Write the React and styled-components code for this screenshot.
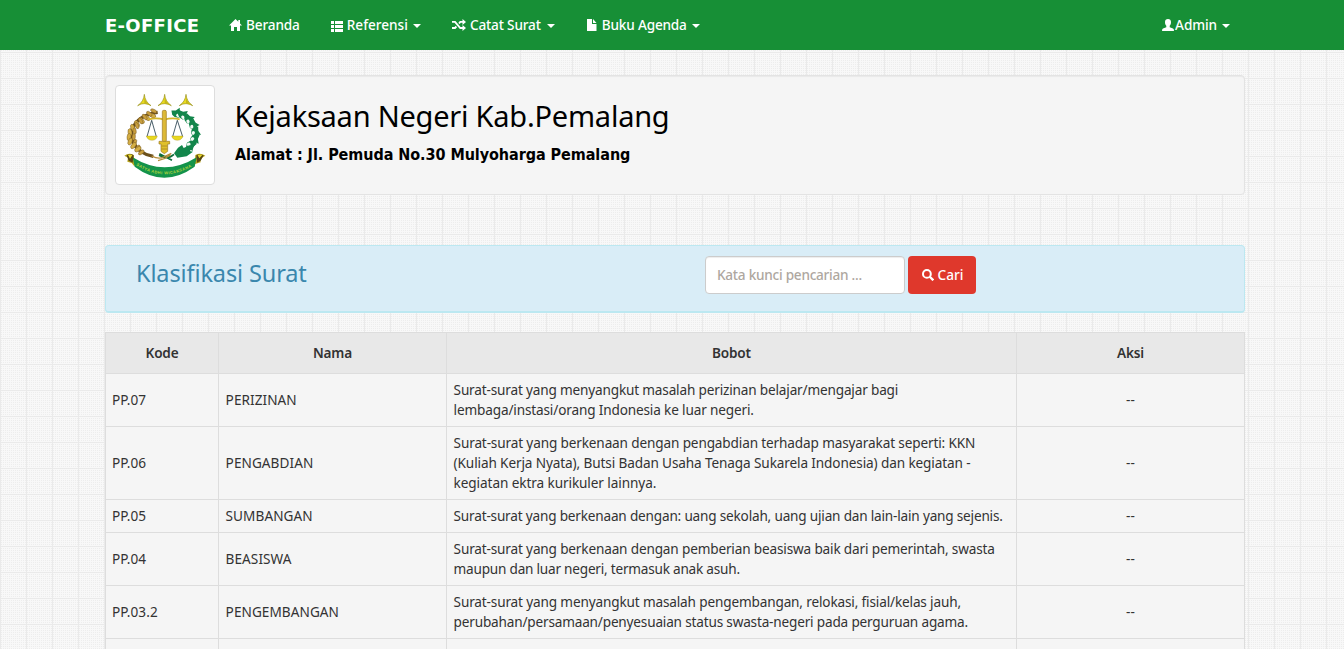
import React from 'react';
import styled, { createGlobalStyle } from 'styled-components';

const Global = createGlobalStyle`
  *, *::before, *::after { box-sizing: border-box; }
  html { overflow: hidden; }
  body {
    margin: 0;
    height: 649px;
    overflow: hidden;
    font-family: "Noto Sans", "Open Sans", sans-serif;
    font-size: 13.6px;
    line-height: 20px;
    color: #333;
    background-color: #f8f8f8;
    background-image:
      linear-gradient(90deg, #eaeaea 1px, transparent 1px),
      linear-gradient(#eaeaea 1px, transparent 1px),
      conic-gradient(#ededed 25%, #f8f8f8 0);
    background-size: 26px 26px, 26px 26px, 2px 2px;
  }
`;

const Navbar = styled.nav`
  height: 50px;
  background: #178f36;
  color: #fff;
`;

const Container = styled.div`
  width: 1140px;
  margin-left: 105px;
`;

const NavInner = styled(Container)`
  display: flex;
  align-items: center;
  height: 50px;
`;

const Brand = styled.div`
  width: 109px;
  padding-top: 2px;
  font: bold 18px/20px "DejaVu Sans", sans-serif;
  letter-spacing: 0.3px;
`;

const NavItem = styled.a`
  display: flex;
  align-items: center;
  gap: ${p => p.$gap ?? 4}px;
  padding: 0 15px 0 ${p => p.$pl ?? 15}px;
  white-space: nowrap;
  font-weight: 500;
  letter-spacing: ${p => p.$ls ?? 0}px;
  color: #fff;
  margin-left: ${p => (p.$right ? 'auto' : '0')};
`;

const Caret = styled.span`
  margin: 2px 0 0 ${p => p.$ml ?? 1}px;
  border: 4px solid transparent;
  border-top-color: #fff;
  border-bottom: 0;
`;

const Well = styled.header`
  display: flex;
  gap: 20px;
  height: 120px;
  margin: 25px 0 50px;
  padding: 9px;
  background: #f5f5f5;
  border: 1px solid #e3e3e3;
  border-radius: 4px;
  box-shadow: inset 0 1px 1px rgba(0, 0, 0, 0.05);
  color: #000;
`;

const Thumb = styled.div`
  width: 100px;
  height: 100px;
  background: #fff;
  border: 1px solid #ddd;
  border-radius: 4px;
  overflow: hidden;
`;

const Title = styled.h1`
  margin: 14px 0 0 -0.5px;
  font-size: 29px;
  line-height: 34px;
  font-weight: 400;
  letter-spacing: -0.23px;
`;

const Address = styled.p`
  margin: 12px 0 0;
  font: bold 16px/20px "DejaVu Sans Condensed", "DejaVu Sans", sans-serif;
  letter-spacing: -0.06px;
`;

const Panel = styled.section`
  display: flex;
  height: 68px;
  margin-bottom: 19px;
  padding: 10px 30px;
  background: #d9edf7;
  border: 1px solid #bce8f1;
  border-bottom-width: 2px;
  border-radius: 4px;
`;

const PanelTitle = styled.h2`
  width: 569px;
  margin: 4px 0 0;
  font-size: 23.5px;
  line-height: 26px;
  font-weight: 400;
  letter-spacing: -0.12px;
  color: #3a87ad;
`;

const Search = styled.input`
  width: 200px;
  height: 38px;
  padding: 0 11px 1px;
  border: 1px solid #ccc;
  border-radius: 4px;
  font: 500 13.6px/20px "Noto Sans", sans-serif;
  letter-spacing: -0.25px;
  box-shadow: inset 0 1px 1px rgba(0, 0, 0, 0.075);
  &::placeholder { color: #aea79f; opacity: 1; }
`;

const Button = styled.button`
  display: flex;
  align-items: center;
  justify-content: center;
  gap: 4px;
  width: 68px;
  height: 38px;
  margin-left: 3px;
  padding: 0 0 0 1px;
  border: 0;
  border-radius: 4px;
  background: #df382c;
  color: #fff;
  font: 500 13.6px/20px "Noto Sans", sans-serif;
`;

const Table = styled.table`
  width: 1139px;
  table-layout: fixed;
  border-collapse: collapse;
  background: #f5f5f5;
`;

const Th = styled.th`
  width: ${p => p.$w}px;
  height: 41px;
  padding: 0;
  border: 1px solid #ddd;
  background: #e8e8e8;
  font-weight: 600;
  letter-spacing: -0.2px;
`;

const Td = styled.td`
  padding: 6px;
  border: 1px solid #ddd;
  white-space: nowrap;
  letter-spacing: 0.06px;
  text-align: ${p => (p.$center ? 'center' : 'left')};
  &:nth-child(2), &:nth-child(3) { padding-left: 6.6px; }
`;

const Line = styled.div`
  height: 20px;
  letter-spacing: ${p => p.$ls}px;
`;

const HomeIcon = () => (
  <svg width="13" height="12" viewBox="0 0 13 12" fill="#fff">
    <path d="M6.5 0 0 6.6h2V12h3V8h3v4h3V6.6h2L11 4.5V1H9.3v1.8z" />
  </svg>
);
const ListIcon = () => (
  <svg width="12" height="13" viewBox="0 -2 12 13" fill="#fff">
    <path d="M0 0h3v3H0zM4 0h8v3H4zM0 4h3v3H0zM4 4h8v3H4zM0 8h3v3H0zM4 8h8v3H4z" />
  </svg>
);
const RandomIcon = () => (
  <svg width="14" height="12" viewBox="0 0 14 12">
    <path d="M0 2.9h3L8.3 9H11M0 9h3l1.4-1.5M7 4.5l1.3-1.6H11" fill="none" stroke="#fff" strokeWidth="1.9" />
    <path d="M10.5 0 14 3l-3.5 3zM10.5 6 14 9l-3.5 3z" fill="#fff" />
  </svg>
);
const FileIcon = () => (
  <svg width="13" height="12" viewBox="-2 0 13 12" fill="#fff">
    <path d="M0 0h5v5h4.500v7H0zM6 0l3.500 4H6z" />
  </svg>
);
const UserIcon = () => (
  <svg width="12" height="12" viewBox="0 0 12 12" fill="#fff">
    <path d="M6 0C4.100 0 3 1.200 3 3c0 1.600.4 3 1.300 3.800v1.400L1 9.600Q0 10 0 12h12q0-2-1-2.400L7.700 8.200V6.800C8.600 6 9 4.600 9 3 9 1.200 7.900 0 6 0z" />
  </svg>
);
const SearchIcon = () => (
  <svg width="12" height="12" viewBox="0 0 12 12" fill="none" stroke="#fff">
    <circle cx="4.900" cy="4.900" r="3.900" strokeWidth="2" />
    <path d="m7.800 7.800 3.500 3.500" strokeWidth="2.300" />
  </svg>
);

const wheat = [
  [160, 130, -65], [145, 138, -50], [130, 147, -40], [117, 158, -30], [105, 171, -20],
  [97, 186, -8], [94, 202, 5], [97, 217, 20], [106, 231, 38], [118, 243, 52],
];
const cotton = [
  [229, 130, -10], [247, 134, 15], [265, 146, 35], [279, 163, 55],
  [286, 184, 80], [285, 205, 105], [274, 224, 130],
];

const Emblem = () => (
  <svg width="98" height="98" viewBox="48 48 294 294">
    {[133, 194, 258].map(x => (
      <g key={x}>
        <path d={`M${x} 73q2 22 20 34-11-7-20-6-9-1-20 6 18-12 20-34z`} fill="#eadb1e" stroke="#98911f" strokeWidth="2" />
        <path d={`M${x} 80v21l14 3q-12-10-14-24z`} fill="#c4b61c" />
      </g>
    ))}
    <path d="M173 127q-60 8-78 53-7 40 30 66 14 10 35 13" fill="none" stroke="#6b501c" strokeWidth="10" />
    {wheat.map(([x, y, r]) => (
      <g key={y} transform={`translate(${x} ${y}) rotate(${r})`}>
        <ellipse cx="-7" cy="0" rx="6" ry="11" fill="#d5af45" stroke="#6f5220" strokeWidth="1.300" />
        <ellipse cx="7" cy="-2" rx="5" ry="10" fill="#c99f3e" stroke="#6f5220" strokeWidth="1.300" />
      </g>
    ))}
    <path d="M222 130q60 8 66 54 3 45-46 70" fill="none" stroke="#12864b" strokeWidth="12" />
    {cotton.map(([x, y, r]) => (
      <g key={y} transform={`translate(${x} ${y}) rotate(${r})`}>
        <path d="M-13-11 0-9l13-6-2 14 7 7-14 8-11-4-6-8z" fill="#12864b" />
        <path d="M-2 7q2-8 8-4 7 3 2 8-6 4-10-4z" fill="#f3faf5" />
      </g>
    ))}
    <path d="m222 250 12-17 12-8 5 9 18-8-4 16 14 3-19 14-28 4z" fill="#12864b" />
    <path d="M177 256q25 15 45-3M216 271l-38-20" fill="none" stroke="#0e6d3b" strokeWidth="5" />
    <path d="M155 258q22 11 35 3l24-11M174 272q22-5 38-18" fill="none" stroke="#b58b37" strokeWidth="4" />
    <path d="M147 148q22-6 46 1 24-7 46-1" fill="none" stroke="#d4b52a" strokeWidth="5" />
    <path d="m155 151-14 49h28zM232 151l-14 49h30z" fill="none" stroke="#253e4c" strokeWidth="2.500" />
    <path d="M139 198h33q-3 13-16 13t-17-13zM215 198h34q-4 13-17 13t-17-13z" fill="#e8d820" stroke="#a68c22" strokeWidth="1" />
    <rect x="187" y="121" width="12" height="94" rx="4" fill="#ddb936" stroke="#9b7926" strokeWidth="2" />
    <path d="M177 214h32v8h-6v22l-10 7-10-7v-22h-6z" fill="#e0c02c" stroke="#9b7926" strokeWidth="2" />
    <path d="M184 228h18M184 237h18" stroke="#9b7926" strokeWidth="2" />
    <path d="M73 257q14-11 28-2l2 14q90 58 182-1l1-13q15-8 30 2l-15 9 1 11-19 6-4 8-3-15q-82 52-168 0l-5 13-8-10-13-4 2-12z" fill="#b9a51d" />
    <path d="M98 262q96 60 192 0l-6 28q-92 66-180 0z" fill="#14934a" />
    <path d="M80 256q12-6 21 0l-3 22-12-6zM289 256q9-5 22 0l-9 16-11 6z" fill="#574712" />
    <path d="M84 255q7-3 13 1l-7 10zM293 256q8-4 14-1l-9 10z" fill="#e6d62c" />
    <path id="motto" d="M108 286q86 54 172 0" fill="none" />
    <text fontFamily="Liberation Sans, sans-serif" fontSize="12" fontWeight="bold" fill="#b5d63c">
      <textPath href="#motto" textLength="176">SATYA ADHI WICAKSANA</textPath>
    </text>
  </svg>
);

// Each description is a list of [line, letter spacing in px].
const rows = [
  ['PP.07', 'PERIZINAN', [
    ['Surat-surat yang menyangkut masalah perizinan belajar/mengajar bagi', -0.17],
    ['lembaga/instasi/orang Indonesia ke luar negeri.', -0.15],
  ]],
  ['PP.06', 'PENGABDIAN', [
    ['Surat-surat yang berkenaan dengan pengabdian terhadap masyarakat seperti: KKN', -0.14],
    ['(Kuliah Kerja Nyata), Butsi Badan Usaha Tenaga Sukarela Indonesia) dan kegiatan -', -0.12],
    ['kegiatan ektra kurikuler lainnya.', -0.09],
  ]],
  ['PP.05', 'SUMBANGAN', [
    ['Surat-surat yang berkenaan dengan: uang sekolah, uang ujian dan lain-lain yang sejenis.', -0.19],
  ]],
  ['PP.04', 'BEASISWA', [
    ['Surat-surat yang berkenaan dengan pemberian beasiswa baik dari pemerintah, swasta', -0.16],
    ['maupun dan luar negeri, termasuk anak asuh.', -0.22],
  ]],
  ['PP.03.2', 'PENGEMBANGAN', [
    ['Surat-surat yang menyangkut masalah pengembangan, relokasi, fisial/kelas jauh,', -0.15],
    ['perubahan/persamaan/penyesuaian status swasta-negeri pada perguruan agama.', -0.18],
  ]],
  ['', '', [['', 0]]],
];

export default function App() {
  return (
    <>
      <Global />
      <Navbar>
        <NavInner>
          <Brand>E-OFFICE</Brand>
          <NavItem $ls={-0.13}><HomeIcon />Beranda</NavItem>
          <NavItem $pl={16}><ListIcon />Referensi <Caret /></NavItem>
          <NavItem $pl={16} $ls={-0.16}><RandomIcon />Catat Surat <Caret $ml={2} /></NavItem>
          <NavItem $ls={-0.18}><FileIcon />Buku Agenda <Caret $ml={1} /></NavItem>
          <NavItem $right $gap={1} $ls={-0.1}><UserIcon />Admin <Caret $ml={4} /></NavItem>
        </NavInner>
      </Navbar>
      <Container>
        <Well>
          <Thumb><Emblem /></Thumb>
          <div>
            <Title>Kejaksaan Negeri Kab.Pemalang</Title>
            <Address>Alamat : Jl. Pemuda No.30 Mulyoharga Pemalang</Address>
          </div>
        </Well>
        <Panel>
          <PanelTitle>Klasifikasi Surat</PanelTitle>
          <Search placeholder="Kata kunci pencarian ..." />
          <Button><SearchIcon />Cari</Button>
        </Panel>
        <Table>
          <thead>
            <tr><Th $w={113}>Kode</Th><Th $w={228}>Nama</Th><Th $w={570}>Bobot</Th><Th $w={228}>Aksi</Th></tr>
          </thead>
          <tbody>
            {rows.map(([kode, nama, bobot], i) => (
              <tr key={i}>
                <Td>{kode}</Td>
                <Td>{nama}</Td>
                <Td>{bobot.map(([line, ls], j) => <Line key={j} $ls={ls}>{line}</Line>)}</Td>
                <Td $center>{kode && '--'}</Td>
              </tr>
            ))}
          </tbody>
        </Table>
      </Container>
    </>
  );
}
